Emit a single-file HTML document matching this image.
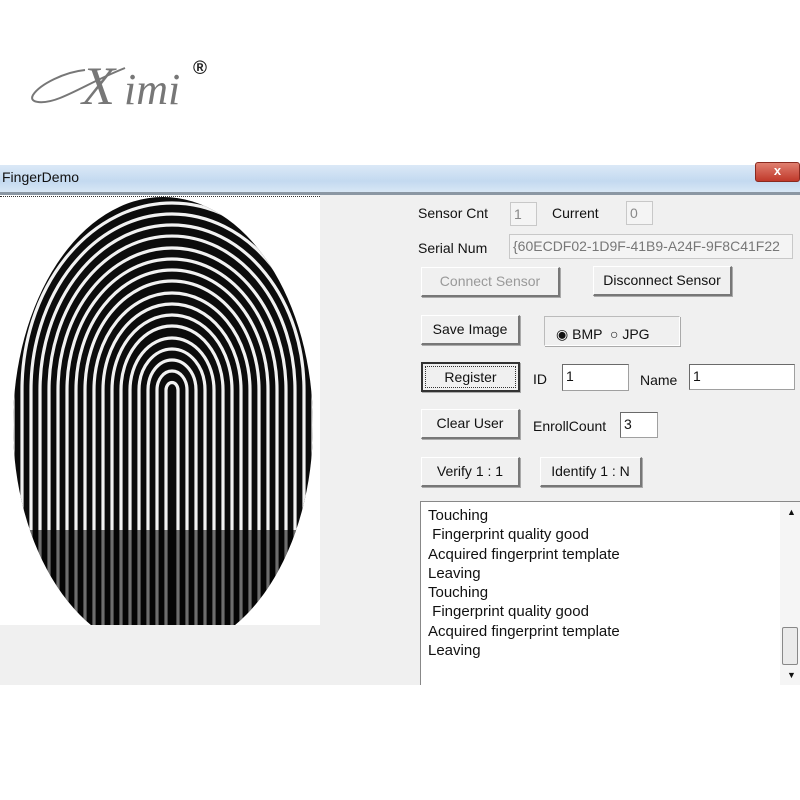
<!DOCTYPE html>
<html><head><meta charset="utf-8"><style>
*{margin:0;padding:0;box-sizing:border-box}
body{width:800px;height:800px;background:#fff;position:relative;overflow:hidden;font-family:"Liberation Sans",Arial,sans-serif;font-size:14px;color:#111}
.a{position:absolute}
.reg{left:193px;top:58px;font-size:19px;color:#222;font-weight:bold}
.win{left:0;top:165px;width:800px;height:520px;background:#f0f0f0}
.title{left:0;top:165px;width:800px;height:27px;background:linear-gradient(#dbe9f7,#c3d9f0 60%,#d8e7f5)}
.close{left:755px;top:162px;width:45px;height:20px;background:linear-gradient(#e08070,#c0392b);border-radius:3px;border:1px solid #8a2a20;color:#fff;font-weight:bold;text-align:center;font-size:13px;line-height:16px}
.tl{left:2px;top:169px;font-size:14px}
.line{left:0;top:192px;width:800px;height:3px;background:#8b97a3}
.lbl{font-size:14px}
.inp{background:#fff;border:1px solid #a0a0a0;border-top-color:#6a6a6a;border-left-color:#6a6a6a;font-size:14px;padding:1px 3px;line-height:20px}
.dis{background:#f4f4f4;color:#888;border-color:#c8c8c8}
.btn{background:#f0f0f0;border:1px solid #fff;border-right:2px solid #777;border-bottom:2px solid #777;box-shadow:1px 1px 0 #aaa;text-align:center;font-size:14px;line-height:26px}
.list{left:420px;top:501px;width:380px;height:184px;background:#fff;border-left:1px solid #888;border-top:1px solid #888;font-size:15px;line-height:19.3px;padding:4px 7px}
.sb{left:780px;top:502px;width:20px;height:183px;background:#f5f5f5}
</style></head><body>
<svg class="a" style="left:0;top:40px" width="240" height="80" viewBox="0 40 240 80">
<path d="M85 70C65 72 40 84 33 95C28 104 45 104 60 98C80 90 95 80 125 68" fill="none" stroke="#777" stroke-width="2"/>
<text x="82" y="104" font-family="Liberation Serif,serif" font-style="italic" font-size="54" fill="#777">X</text>
<text x="124" y="104" font-family="Liberation Serif,serif" font-style="italic" font-size="44" fill="#777">imi</text>
</svg>
<div class="a reg">®</div>
<div class="a win"></div>
<div class="a title"></div>
<div class="a close">x</div>
<div class="a tl">FingerDemo</div>
<div class="a line"></div>
<div class="a" style="left:0;top:195px;width:320px;height:430px;background:#fff"></div>
<svg class="a" style="left:0;top:195px" width="320" height="430" viewBox="0 195 320 430">
<defs><clipPath id="c"><ellipse cx="163" cy="425" rx="150" ry="228"/></clipPath></defs>
<g clip-path="url(#c)">
<rect x="0" y="190" width="320" height="440" fill="#0c0c0c"/>
<g fill="none" stroke="#f2f2f2" stroke-width="3.2">
<path d="M166 640V390A6 7.5 0 0 1 178 390V640"/>
<path d="M157 640V390A15 19 0 0 1 187 390V640"/>
<path d="M148 640V390A24 30 0 0 1 196 390V640"/>
<path d="M139 640V390A33 41 0 0 1 205 390V640"/>
<path d="M130 640V390A42 52 0 0 1 214 390V640"/>
<path d="M121 640V390A51 64 0 0 1 223 390V640"/>
<path d="M112 640V390A60 75 0 0 1 232 390V640"/>
<path d="M103 640V390A69 86 0 0 1 241 390V640"/>
<path d="M94 640V390A78 97 0 0 1 250 390V640"/>
<path d="M85 640V390A87 109 0 0 1 259 390V640"/>
<path d="M76 640V390A96 120 0 0 1 268 390V640"/>
<path d="M67 640V390A105 131 0 0 1 277 390V640"/>
<path d="M58 640V390A114 142 0 0 1 286 390V640"/>
<path d="M49 640V390A123 154 0 0 1 295 390V640"/>
<path d="M40 640V390A132 165 0 0 1 304 390V640"/>
<path d="M31 640V390A141 176 0 0 1 313 390V640"/>
<path d="M22 640V390A150 187 0 0 1 322 390V640"/>
<path d="M13 640V390A159 199 0 0 1 331 390V640"/>
</g>
<rect x="0" y="530" width="320" height="100" fill="#000" opacity=".55"/>
</g>
</svg>
<div class="a" style="left:0;top:196px;width:320px;border-top:1px dotted #333"></div>

<div class="a lbl" style="left:418px;top:205px">Sensor Cnt</div>
<div class="a inp dis" style="left:510px;top:202px;width:27px;height:24px">1</div>
<div class="a lbl" style="left:552px;top:205px">Current</div>
<div class="a inp dis" style="left:626px;top:201px;width:27px;height:24px">0</div>
<div class="a lbl" style="left:418px;top:240px">Serial Num</div>
<div class="a inp dis" style="left:509px;top:234px;width:284px;height:25px;white-space:nowrap;overflow:hidden;color:#777">{60ECDF02-1D9F-41B9-A24F-9F8C41F22</div>
<div class="a btn" style="left:421px;top:267px;width:139px;height:30px;color:#999">Connect Sensor</div>
<div class="a btn" style="left:593px;top:266px;width:139px;height:30px">Disconnect Sensor</div>
<div class="a btn" style="left:421px;top:315px;width:99px;height:30px">Save Image</div>
<div class="a" style="left:544px;top:316px;width:136px;height:30px;border:1px solid #bbb;border-right-color:#fff;border-bottom-color:#fff;box-shadow:1px 1px 0 #aaa"></div>
<div class="a lbl" style="left:556px;top:326px">◉ BMP &nbsp;○ JPG</div>
<div class="a btn" style="left:421px;top:362px;width:99px;height:30px;border:2px solid #333;outline:1px dotted #333;outline-offset:-5px">Register</div>
<div class="a lbl" style="left:533px;top:371px">ID</div>
<div class="a inp" style="left:562px;top:364px;width:67px;height:27px">1</div>
<div class="a lbl" style="left:640px;top:372px">Name</div>
<div class="a inp" style="left:689px;top:364px;width:106px;height:26px">1</div>
<div class="a btn" style="left:421px;top:409px;width:99px;height:30px">Clear User</div>
<div class="a lbl" style="left:533px;top:418px">EnrollCount</div>
<div class="a inp" style="left:620px;top:412px;width:38px;height:26px">3</div>
<div class="a btn" style="left:421px;top:457px;width:99px;height:30px">Verify 1 : 1</div>
<div class="a btn" style="left:540px;top:457px;width:102px;height:30px">Identify 1 : N</div>
<div class="a list">Touching<br>&nbsp;Fingerprint quality good<br>Acquired fingerprint template<br>Leaving<br>Touching<br>&nbsp;Fingerprint quality good<br>Acquired fingerprint template<br>Leaving</div>
<div class="a sb"></div>
<div class="a" style="left:787px;top:507px;font-size:9px">▲</div>
<div class="a" style="left:782px;top:627px;width:16px;height:38px;background:#eaeaea;border:1px solid #888;border-radius:2px"></div>
<div class="a" style="left:787px;top:670px;font-size:9px">▼</div>
</body></html>
